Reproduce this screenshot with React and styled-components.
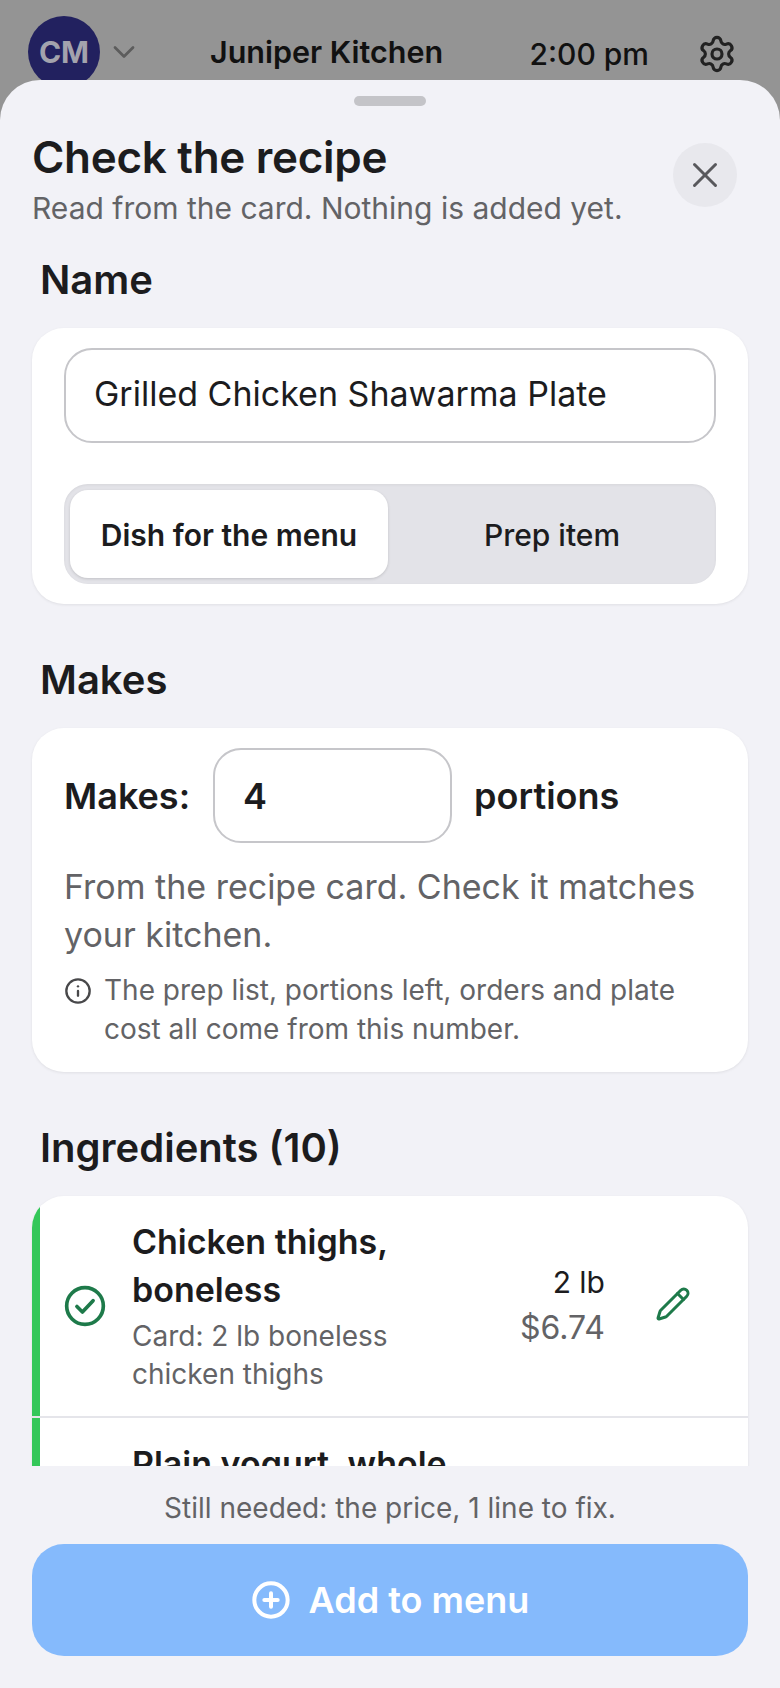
import React from "react";
import styled, { createGlobalStyle } from "styled-components";
import { ChevronDown, Settings, X, Info, Pencil, CirclePlus } from "lucide-react";

const Global = createGlobalStyle`
  html, body { margin: 0; padding: 0; }
  body { font-family: Inter, "Liberation Sans", sans-serif; background: #949494; }
  * { box-sizing: border-box; }
`;

const Page = styled.div`
  width: 780px; height: 1688px; display: flex; flex-direction: column; overflow: hidden; background: #949494;
`;
const TopBar = styled.header`
  height: 80px; flex: none; padding: 16px 43px 0 28px; display: flex; align-items: flex-start;
`;
const Avatar = styled.div`
  width: 72px; height: 72px; flex: none; border-radius: 50%; background: #22215f; color: #a3a3ad;
  display: flex; align-items: center; justify-content: center; font-size: 30px; font-weight: 700;
`;
const Chevron = styled.div`
  width: 38px; height: 72px; flex: none; margin-left: 5px; display: flex; align-items: center; justify-content: center; color: #5c5c5c;
`;
const Venue = styled.div`
  flex: none; margin-left: 67px; height: 72px; line-height: 72px; font-size: 30.5px; font-weight: 600; color: #111;
`;
const Clock = styled.div`
  flex: none; margin-left: auto; margin-top: 2px; height: 72px; line-height: 72px; font-size: 30px; font-weight: 500; color: #111;
`;
const Gear = styled.div`
  width: 40px; height: 72px; flex: none; margin-left: 48px; margin-top: 2px; display: flex; align-items: center; justify-content: center; color: #222;
`;
const Sheet = styled.main`
  flex: 1; min-height: 0; position: relative; background: #f2f2f7; border-radius: 40px 40px 0 0;
  display: flex; flex-direction: column;
`;
const Handle = styled.div`
  width: 72px; height: 10px; border-radius: 5px; background: #c4c4c8; margin: 16px auto 0; flex: none;
`;
const SheetHead = styled.div`
  flex: none; padding: 23px 43px 0 32px; display: flex; justify-content: space-between;
`;
const Title = styled.h1`
  margin: 0; font-size: 44px; line-height: 56px; font-weight: 600; color: #1c1c1e; letter-spacing: -0.3px;
`;
const Subtitle = styled.p`
  margin: 5px 0 0; font-size: 30px; line-height: 36px; color: #636366;
`;
const CloseBtn = styled.button`
  width: 64px; height: 64px; border-radius: 50%; border: 0; background: #e8e8ed; color: #58585c; padding: 0;
  display: flex; align-items: center; justify-content: center; margin-top: 14px; flex: none;
`;
const Scroll = styled.div`
  flex: 1; min-height: 0; overflow: hidden; padding: 0 32px;
`;
const SectionLabel = styled.h2`
  margin: 0; padding: ${p => p.$top || 48}px 8px 0; font-size: 40px; line-height: 56px; font-weight: 600; color: #1c1c1e;
`;
const Card = styled.section`
  background: #fff; border-radius: 32px; box-shadow: 0 1px 3px rgba(0,0,0,0.08);
  padding: 20px 32px ${p => p.$bottom || 20}px; margin: 20px 0 0;
`;
const TextField = styled.div`
  height: 95px; border: 2px solid #c6c6ca; border-radius: 28px; background: #fff; padding: 0 28px 4px;
  display: flex; align-items: center; font-size: 34px; color: #1c1c1e;
`;
const Segments = styled.div`
  margin-top: 41px; height: 100px; background: #e3e3e8; border-radius: 24px; padding: 6px 0 6px 6px; display: grid; grid-template-columns: 318px 1fr;
  box-shadow: inset 0 1px 3px rgba(0,0,0,0.06);
`;
const Segment = styled.div`
  display: flex; align-items: center; justify-content: center; font-size: 30px; color: #1c1c1e; padding-top: 2px;
  font-weight: ${p => (p.$on ? 600 : 500)};
  border-radius: 18px;
  background: ${p => (p.$on ? "#fff" : "transparent")};
  box-shadow: ${p => (p.$on ? "0 1px 3px rgba(0,0,0,0.15)" : "none")};
`;
const MakesRow = styled.div`
  display: flex; align-items: center; font-size: 36px; font-weight: 600; color: #1c1c1e;
`;
const NumberField = styled.div`
  width: 239px; height: 95px; margin: 0 22px 0 23px; border: 2px solid #c6c6ca; border-radius: 28px; padding: 0 28px;
  display: flex; align-items: center; font-size: 36px; font-weight: 600;
`;
const Para = styled.p`
  margin: 20px 0 0; font-size: 34px; line-height: 48px; color: #636366;
`;
const Note = styled.div`
  margin-top: 12px; position: relative; padding-left: 40px; font-size: 28px; line-height: 39px; color: #636366;
  svg { position: absolute; left: 0; top: 6px; color: #48484a; }
`;
const List = styled.section`
  background: #fff; border-radius: 32px 32px 0 0; overflow: hidden; margin-top: 20px; box-shadow: 0 1px 3px rgba(0,0,0,0.08);
`;
const Row = styled.div`
  display: flex; & + & { border-top: 2px solid #e5e5ea; }
`;
const Stripe = styled.div`
  width: 8px; flex: none; background: #34c759;
`;
const RowBody = styled.div`
  flex: 1; display: flex; align-items: center; padding: 22px 0 23px 23px;
`;
const RowCheck = styled.div`
  width: 44px; flex: none; color: #1e7a4a; display: flex; margin-right: 25px;
`;
const RowMain = styled.div`
  width: 330px; flex: none;
`;
const RowName = styled.div`
  font-size: 34px; line-height: 48px; font-weight: 600; color: #1c1c1e;
`;
const RowSource = styled.div`
  font-size: 28px; line-height: 38px; color: #636366; margin-top: 3px;
`;
const RowAmounts = styled.div`
  width: 143px; flex: none; text-align: right; margin-top: -2px;
`;
const Qty = styled.div`
  font-size: 30px; line-height: 46px; color: #1c1c1e;
`;
const Cost = styled.div`
  font-size: 32px; line-height: 46px; color: #636366;
`;
const EditBtn = styled.div`
  color: #1e7a4a; margin-left: 50px; display: flex; margin-top: -4px;
`;
const Footer = styled.footer`
  flex: none; height: 222px; padding: 24px 32px 0; background: #f2f2f7; text-align: center;
`;
const Need = styled.div`
  font-size: 28px; line-height: 36px; color: #636366;
`;
const AddBtn = styled.button`
  width: 100%; height: 112px; margin-top: 18px; border: 0; border-radius: 32px; background: #85bafc; color: #fff;
  font-family: inherit; font-size: 36px; font-weight: 600; display: flex; align-items: center; justify-content: center; gap: 18px;
`;

const CheckCircleIcon = () => (
  <svg width="44" height="44" viewBox="0 0 24 24" fill="none" stroke="currentColor" strokeWidth="2" strokeLinecap="round" strokeLinejoin="round">
    <circle cx="12" cy="12" r="10" />
    <path d="M7.6 12.3l3 3 5.8-6.2" />
  </svg>
);

export default function App() {
  return (
    <>
      <Global />
      <Page>
        <TopBar>
          <Avatar>CM</Avatar>
          <Chevron><ChevronDown size={36} strokeWidth={1.8} /></Chevron>
          <Venue>Juniper Kitchen</Venue>
          <Clock>2:00 pm</Clock>
          <Gear><Settings size={40} strokeWidth={1.9} /></Gear>
        </TopBar>
        <Sheet>
          <Handle />
          <SheetHead>
            <div>
              <Title>Check the recipe</Title>
              <Subtitle>Read from the card. Nothing is added yet.</Subtitle>
            </div>
            <CloseBtn aria-label="Close"><X size={42} strokeWidth={1.7} /></CloseBtn>
          </SheetHead>
          <Scroll>
            <SectionLabel $top={26}>Name</SectionLabel>
            <Card>
              <TextField>Grilled Chicken Shawarma Plate</TextField>
              <Segments>
                <Segment $on>Dish for the menu</Segment>
                <Segment>Prep item</Segment>
              </Segments>
            </Card>
            <SectionLabel>Makes</SectionLabel>
            <Card $bottom={23}>
              <MakesRow>
                Makes:
                <NumberField>4</NumberField>
                portions
              </MakesRow>
              <Para>From the recipe card. Check it matches your kitchen.</Para>
              <Note>
                <Info size={28} strokeWidth={2} />
                The prep list, portions left, orders and plate cost all come from this number.
              </Note>
            </Card>
            <SectionLabel>Ingredients (10)</SectionLabel>
            <List>
              <Row>
                <Stripe />
                <RowBody>
                  <RowCheck><CheckCircleIcon /></RowCheck>
                  <RowMain>
                    <RowName>Chicken thighs, boneless</RowName>
                    <RowSource>Card: 2 lb boneless chicken thighs</RowSource>
                  </RowMain>
                  <RowAmounts>
                    <Qty>2 lb</Qty>
                    <Cost>$6.74</Cost>
                  </RowAmounts>
                  <EditBtn><Pencil size={36} strokeWidth={2} /></EditBtn>
                </RowBody>
              </Row>
              <Row>
                <Stripe />
                <RowBody>
                  <RowCheck />
                  <RowMain>
                    <RowName>Plain yogurt, whole</RowName>
                  </RowMain>
                </RowBody>
              </Row>
            </List>
          </Scroll>
          <Footer>
            <Need>Still needed: the price, 1 line to fix.</Need>
            <AddBtn><CirclePlus size={40} strokeWidth={2.4} />Add to menu</AddBtn>
          </Footer>
        </Sheet>
      </Page>
    </>
  );
}
